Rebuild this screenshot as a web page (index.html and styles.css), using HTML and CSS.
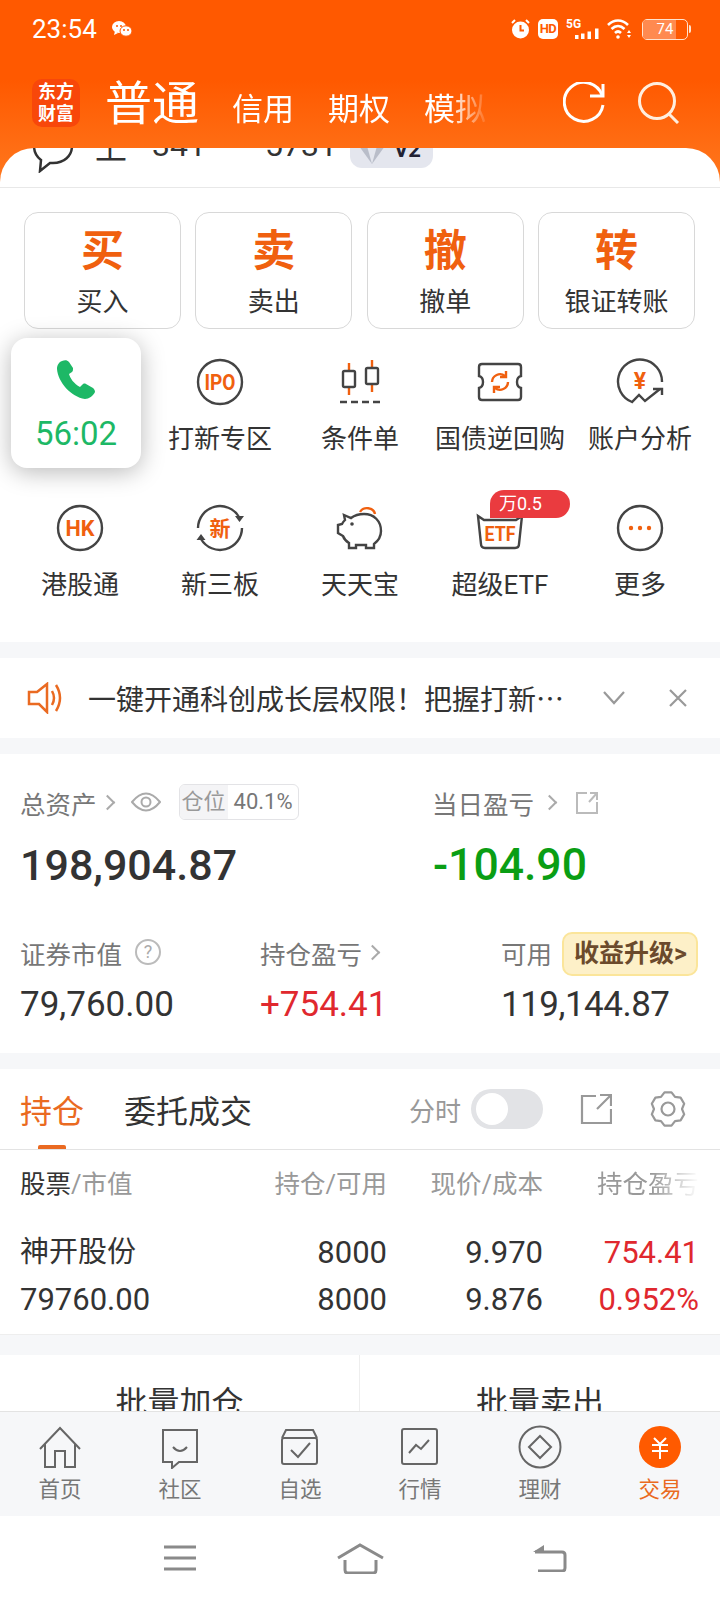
FILE: index.html
```html
<!DOCTYPE html>
<html lang="zh-CN">
<head>
  <meta charset="utf-8">
  <title>交易</title>
  <link rel="stylesheet" href="styles.css">
</head>
<body>
<div class="screen">

  <div class="top">
    <div class="status">
      <span class="clock">23:54</span>
      <svg class="st-wechat" width="20" height="16" viewBox="0 0 20 16"><ellipse cx="7" cy="6" rx="7" ry="6" fill="#fff"/><path d="M3 10l-1 4 4-2z" fill="#fff"/><ellipse cx="14" cy="10" rx="6" ry="5.2" fill="#fff" stroke="#ff5a00"/><circle cx="12" cy="9" r="1" fill="#ff5a00"/><circle cx="16" cy="9" r="1" fill="#ff5a00"/><circle cx="5" cy="5" r="1" fill="#ff5a00"/><circle cx="9" cy="5" r="1" fill="#ff5a00"/></svg>
      <div class="st-right">
        <svg width="19" height="20" viewBox="0 0 19 20"><circle cx="9.500" cy="11" r="8.500" fill="#fff"/><path d="M9.500 6v5.500H13" fill="none" stroke="#ff5a00" stroke-width="2"/><path d="M1 4l3-3M18 4l-3-3" stroke="#fff" stroke-width="2"/></svg>
        <span class="st-hd">HD</span>
        <svg width="33" height="22" viewBox="0 0 33 22"><text x="0" y="10" class="st-5g">5G</text><rect x="9" y="17" width="3.500" height="4" fill="#fff"/><rect x="15" y="15.500" width="3.500" height="5.500" fill="#fff"/><rect x="21.500" y="13.500" width="3.500" height="7.500" fill="#fff"/><rect x="29" y="10.500" width="3.500" height="10.500" fill="#fff"/></svg>
        <svg width="25" height="20" viewBox="0 0 25 20"><path d="M1 6c6-6 14-6 20 0M4.500 10c4-4 9-4 13 0M8 14c2-2 4-2 6 0" fill="none" stroke="#fff" stroke-width="2.600"/><circle cx="11" cy="18" r="1.800" fill="#fff"/><path d="M22 11l2 3h-4zM22 19l2-3h-4z" fill="#fff"/></svg>
        <div class="battery"><div class="battery-fill"></div><span>74</span></div>
      </div>
    </div>
    <div class="appbar">
      <div class="logo">东方<br>财富</div>
      <div class="acct-tabs">
        <span class="acct-on">普通</span>
        <span>信用</span>
        <span>期权</span>
        <span>模拟</span>
      </div>
      <svg class="bar-ico" width="42" height="42" viewBox="0 0 42 42" fill="none" stroke="#fff" stroke-width="3"><path d="M39 13A19.500 19.500 0 1 0 40 23"/><path d="M40 2v12H27"/></svg>
      <svg class="bar-ico" width="42" height="42" viewBox="0 0 42 42" fill="none" stroke="#ffeede" stroke-width="3"><circle cx="19" cy="19" r="17.500"/><path d="M31 32l9 9"/></svg>
    </div>
  </div>

  <div class="panel">
    <div class="peek">
      <div class="peek-row">
        <svg class="peek-chat" width="42" height="46" viewBox="0 0 42 46" fill="none" stroke="#333" stroke-width="2.500"><path d="M20 2C9 2 2 9 2 19c0 6 3 11 7 14l-1 11 10-8c1 0 2 0 3 0 11 0 19-7 19-17S31 2 20 2z"/></svg>
        <span class="peek-a">上</span>
        <span class="peek-b">341</span>
        <span class="peek-c">5731</span>
        <span class="peek-v"><svg width="28" height="40" viewBox="0 0 28 40"><path d="M1 20h26L14 38z" fill="#b9bdc9"/><path d="M14 38l-5-18h10z" fill="#e4e6ee"/></svg><b>V2</b></span>
      </div>
    </div>

    <div class="actions">
      <div class="act"><span class="act-big">买</span><span>买入</span></div>
      <div class="act"><span class="act-big">卖</span><span>卖出</span></div>
      <div class="act"><span class="act-big">撤</span><span>撤单</span></div>
      <div class="act"><span class="act-big">转</span><span>银证转账</span></div>
    </div>

    <div class="menu">
      <div class="menu-item"></div>
      <div class="menu-item">
        <svg width="48" height="48" viewBox="0 0 48 48"><circle class="ln" cx="24" cy="24" r="22"/><text class="og" x="24" y="32" font-size="22" text-anchor="middle" textLength="31" lengthAdjust="spacingAndGlyphs">IPO</text></svg>
        <span>打新专区</span>
      </div>
      <div class="menu-item">
        <svg width="48" height="48" viewBox="0 0 48 48"><path class="lo" d="M13 5v32M36 2v32"/><rect class="ln-f" x="7" y="13" width="12" height="16" rx="1.500"/><rect class="ln-f" x="30" y="10" width="12" height="16" rx="1.500"/><path class="ln" d="M4 44h41" stroke-dasharray="7 4"/></svg>
        <span>条件单</span>
      </div>
      <div class="menu-item">
        <svg width="48" height="48" viewBox="0 0 48 48"><path class="ln" d="M6 6h36q3 0 3 3v9q-4 1-4 6t4 6v9q0 3-3 3H6q-3 0-3-3V30q4-1 4-6t-4-6V9q0-3 3-3z"/><path class="lo" d="M16 24a8 8 0 0 1 13-6M32 24a8 8 0 0 1-13 6"/><path class="lo" d="M30 13v6h-6M18 35v-6h6"/></svg>
        <span>国债逆回购</span>
      </div>
      <div class="menu-item">
        <svg width="48" height="48" viewBox="0 0 48 48"><path class="ln" d="M46 24A22 22 0 1 0 16 44l7-7 6 6 15-12"/><path class="ln" d="M37 31h9v6"/><text class="og" x="24" y="31" font-size="23" text-anchor="middle">¥</text></svg>
        <span>账户分析</span>
      </div>
      <div class="menu-item">
        <svg width="48" height="48" viewBox="0 0 48 48"><circle class="ln" cx="24" cy="24" r="22"/><text class="og" x="24" y="32" font-size="22" text-anchor="middle" textLength="29" lengthAdjust="spacingAndGlyphs">HK</text></svg>
        <span>港股通</span>
      </div>
      <div class="menu-item">
        <svg width="48" height="48" viewBox="0 0 48 48"><path class="ln" d="M2 24A22 22 0 0 1 43 13M46 24A22 22 0 0 1 5 35"/><path d="M39 12h9l-4.500 6zM.5 36h9L5 30z" fill="#444"/><text class="og" x="24" y="32" font-size="21" text-anchor="middle">新</text></svg>
        <span>新三板</span>
      </div>
      <div class="menu-item">
        <svg width="48" height="48" viewBox="0 0 48 48"><path class="ln" d="M8 11l7 3c4-3 9-4 13-4 10 0 17 7 17 17 0 6-3 10-7 13v4h-8v-3H20v3h-7v-5c-3-2-5-4-6-7l-5-3v-8l4-1c1-2 2-3 3-4z"/><circle cx="16" cy="20" r="1.800" fill="#444"/><path class="lo" d="M24 8a8 7 0 0 1 15 2"/></svg>
        <span>天天宝</span>
      </div>
      <div class="menu-item">
        <svg width="48" height="48" viewBox="0 0 48 48"><path class="ln" d="M2 12l6 4h32l6-4-3 28q0 4-4 4H9q-4 0-4-4z"/><text class="og" x="24" y="37" font-size="20" text-anchor="middle" textLength="31" lengthAdjust="spacingAndGlyphs">ETF</text></svg>
        <span>超级ETF</span>
        <em class="menu-tag">万0.5</em>
      </div>
      <div class="menu-item">
        <svg width="48" height="48" viewBox="0 0 48 48"><circle class="ln" cx="24" cy="24" r="22"/><circle cx="15" cy="24" r="2.200" fill="#f0600f"/><circle cx="24" cy="24" r="2.200" fill="#f0600f"/><circle cx="33" cy="24" r="2.200" fill="#f0600f"/></svg>
        <span>更多</span>
      </div>
    </div>
  </div>

  <div class="notice">
    <svg width="36" height="32" viewBox="0 0 36 32" fill="none" stroke="#ea6a21" stroke-width="2.500"><path d="M2 10h8l10-8v28l-8-8H2z"/><path d="M25 9q4 7 0 14M29 3q8 13 0 26"/></svg>
    <span class="notice-txt">一键开通科创成长层权限！把握打新…</span>
    <svg class="notice-down" width="22" height="14" viewBox="0 0 22 14" fill="none" stroke="#999" stroke-width="2.200"><path d="M1 1l10 11L21 1"/></svg>
    <svg class="notice-x" width="18" height="18" viewBox="0 0 18 18" fill="none" stroke="#999" stroke-width="2.200"><path d="M1 1l16 16M17 1L1 17"/></svg>
  </div>

  <div class="assets">
    <div class="as-top">
      <div class="as-cell">
        <div class="as-label">总资产<i class="chev"></i>
          <svg class="as-eye" width="30" height="20" viewBox="0 0 30 20" fill="none" stroke="#aaa" stroke-width="2"><path d="M1 10q14-17 28 0-14 17-28 0z"/><circle cx="15" cy="10" r="4.500"/></svg>
          <span class="pill"><span class="pill-l">仓位</span><span class="pill-r">40.1%</span></span>
        </div>
        <div class="as-big">198,904.87</div>
      </div>
      <div class="as-cell">
        <div class="as-label">当日盈亏<i class="chev chev-w"></i>
          <svg class="as-share" width="24" height="23" viewBox="0 0 24 23" fill="none" stroke="#bbb" stroke-width="2"><path d="M12 2H2v20h20V11M14 11l8-9M15 2h7v7"/></svg>
        </div>
        <div class="as-big as-green">-104.90</div>
      </div>
    </div>
    <div class="as-bottom">
      <div class="as-col">
        <div class="as-label as-h">证券市值
          <span class="qmark">?</span>
        </div>
        <div class="as-num">79,760.00</div>
      </div>
      <div class="as-col as-col-2">
        <div class="as-label as-h">持仓盈亏<i class="chev"></i></div>
        <div class="as-num as-red">+754.41</div>
      </div>
      <div class="as-col as-col-3">
        <div class="as-label as-h">可用<span class="upgrade">收益升级&gt;</span></div>
        <div class="as-num as-tight">119,144.87</div>
      </div>
    </div>
  </div>

  <div class="holdings">
    <div class="h-tabs">
      <span class="h-tab h-on">持仓</span>
      <span class="h-tab">委托成交</span>
      <span class="h-time">分时</span>
      <span class="toggle"><span class="knob"></span></span>
      <svg class="h-share" width="32" height="30" viewBox="0 0 32 30" fill="none" stroke="#999" stroke-width="2.200"><path d="M16 2H2v27h29V15M17 15L30 2M20 1h11v11"/></svg>
      <svg class="h-gear" width="38" height="36" viewBox="-1 -1 38 36" fill="none" stroke="#999" stroke-width="2.200" stroke-linejoin="round"><path d="M14.500.4h7L25 4.900l5.600.7 3.600 6.100L32 17l2.200 5.300-3.600 6.100-5.600.7-3.500 4.500h-7L11 29.100l-5.600-.7-3.600-6.100L4 17l-2.200-5.300 3.600-6.100 5.600-.7z"/><circle cx="18" cy="17" r="6.500"/></svg>
    </div>
    <div class="tbl-head">
      <span><b>股票</b>/市值</span>
      <span class="r">持仓/可用</span>
      <span class="r">现价/成本</span>
      <span class="r tbl-fade">持仓盈亏</span>
    </div>
    <div class="tbl-body">
      <span class="tbl-cn">神开股份</span><span class="r">8000</span><span class="r">9.970</span><span class="r as-red">754.41</span>
      <span>79760.00</span><span class="r">8000</span><span class="r">9.876</span><span class="r as-red">0.952%</span>
    </div>
  </div>

  <div class="batch">
    <span>批量加仓</span>
    <span>批量卖出</span>
  </div>

  <div class="nav">
    <div class="nav-item">
      <svg width="44" height="44" viewBox="0 0 44 44"><path class="nl" d="M2 24L22 3l20 21M7 19v23h10V26h10v16h10V19"/></svg>
      <span>首页</span>
    </div>
    <div class="nav-item">
      <svg width="44" height="44" viewBox="0 0 44 44"><path class="nl" d="M5 5h34v32H21l-7 6v-6H5z"/><path class="nl" d="M15 22q7 8 14 0"/></svg>
      <span>社区</span>
    </div>
    <div class="nav-item">
      <svg width="44" height="44" viewBox="0 0 44 44"><rect class="nl" x="4" y="13" width="35" height="26" rx="2"/><path class="nl" d="M4 13l4-8h27l4 8"/><path class="nl" d="M13 25l7 7 12-14"/></svg>
      <span>自选</span>
    </div>
    <div class="nav-item">
      <svg width="44" height="44" viewBox="0 0 44 44"><rect class="nl" x="4" y="4" width="35" height="35" rx="2"/><path class="nl" d="M11 28l7-8 5 4 8-9"/></svg>
      <span>行情</span>
    </div>
    <div class="nav-item">
      <svg width="44" height="44" viewBox="0 0 44 44"><circle class="nl" cx="22" cy="22" r="20.500"/><path class="nl" d="M22 11l11 11-11 11-11-11z"/></svg>
      <span>理财</span>
    </div>
    <div class="nav-item nav-on">
      <svg width="44" height="44" viewBox="0 0 44 44"><circle cx="22" cy="22" r="21" fill="#ff5a00"/><path d="M16 13l6 6 6-6M14 20h16M14 26h16M22 19v15" fill="none" stroke="#fff" stroke-width="2"/></svg>
      <span>交易</span>
    </div>
  </div>

  <div class="sysbar">
    <svg width="34" height="26" viewBox="0 0 34 26"><path d="M1 2h32M1 13h32M1 24h32" stroke="#8a8a8a" stroke-width="3"/></svg>
    <svg width="47" height="31" viewBox="0 0 47 31" fill="none" stroke="#8a8a8a" stroke-width="3"><path d="M1 15L23 2l23 13M8 17v10q0 3 3 3h25q3 0 3-3V17"/></svg>
    <svg width="35" height="28" viewBox="0 0 35 28" fill="none" stroke="#8a8a8a" stroke-width="3"><path d="M3 8h27q3 0 3 3v13q0 3-3 3H6"/><path d="M1 8l11-7v7z" fill="#8a8a8a" stroke="none"/></svg>
  </div>

  <div class="call">
    <svg width="40" height="40" viewBox="0 0 40 40"><path fill="#1db866" d="M6 1C3 2 1 5 1 9c1 13 14 28 28 30 4 0 8-3 10-7 0-2-1-3-2-4l-7-4c-2-1-3 0-4 1l-2 2c-6-3-10-9-11-13l3-2c1-1 1-2 1-4l-4-6c-2-2-4-2-7-1z"/></svg>
    <span>56:02</span>
  </div>

</div>
</body>
</html>
```

FILE: styles.css
```css
* { box-sizing: border-box; }
html, body { margin: 0; padding: 0; }
body {
  font-family: Roboto, "Noto Sans CJK SC", sans-serif;
  color: #333;
  background: #fff;
}
.screen {
  position: relative;
  width: 720px;
  height: 1600px;
  overflow: hidden;
  background: #f6f7f9;
}

/* orange head */
.top {
  height: 190px;
  background: linear-gradient(#ff5900 0, #ff5900 80px, #ff7a20 190px);
  color: #fff;
}
.status {
  height: 58px;
  display: flex;
  align-items: center;
  padding: 0 32px;
}
.clock { font-size: 26px; }
.st-wechat { margin-left: 15px; }
.st-right {
  margin-left: auto;
  display: flex;
  align-items: center;
  gap: 8px;
}
.st-hd {
  width: 20px;
  height: 20px;
  background: #fff;
  color: #ff5a00;
  border-radius: 5px;
  font-size: 13px;
  font-weight: 700;
  line-height: 20px;
  text-align: center;
  letter-spacing: -.5px;
}
.st-5g { font-size: 12px; font-weight: 700; fill: #fff; }
.battery {
  position: relative;
  width: 46px;
  height: 21px;
  border: 1.5px solid #ffe3cf;
  border-radius: 5px;
  margin-left: 2px;
}
.battery::after {
  content: "";
  position: absolute;
  right: -4px;
  top: 5px;
  width: 2px;
  height: 8px;
  border-radius: 0 2px 2px 0;
  background: #ffe3cf;
}
.battery-fill {
  width: 74%;
  height: 100%;
  background: #ff8a50;
  border-radius: 3px 0 0 3px;
}
.battery span {
  position: absolute;
  inset: 0;
  font-size: 15px;
  line-height: 18px;
  text-align: center;
}
.appbar {
  display: flex;
  align-items: flex-start;
  padding: 21px 40px 0 32px;
}
.logo {
  width: 48px;
  height: 48px;
  border-radius: 10px;
  background: #f8470a;
  font-size: 18px;
  font-weight: 700;
  line-height: 22px;
  text-align: center;
  padding-top: 2px;
}
.acct-tabs {
  margin-left: 25px;
  width: 385px;
  display: flex;
  align-items: baseline;
  gap: 34px;
  font-size: 31px;
  line-height: 50px;
  -webkit-mask-image: linear-gradient(90deg, #000 345px, transparent 385px);
  mask-image: linear-gradient(90deg, #000 345px, transparent 385px);
}
.acct-on { font-size: 47px; margin-right: -1px; }
.bar-ico { margin-left: auto; margin-top: 3px; }
.bar-ico:last-child { margin-left: 33px; }

/* white sheet */
.panel {
  margin-top: -42px;
  position: relative;
  background: #fff;
  border-radius: 34px 34px 0 0;
  overflow: hidden;
  height: 494px;
}
.peek {
  height: 40px;
  overflow: hidden;
  border-bottom: 1px solid #e8e8e8;
}
.peek-row {
  margin-top: -26px;
  height: 46px;
  display: flex;
  align-items: center;
  font-size: 32px;
  padding-left: 32px;
  color: #333;
}
.peek-chat { flex: none; margin-top: 10px; }
.peek-a { margin-left: 21px; }
.peek-b { margin-left: 25px; }
.peek-c { margin-left: 59px; }
.peek-v {
  margin-left: 13px;
  width: 83px;
  height: 40px;
  margin-top: 6px;
  border-radius: 12px;
  background: #e4e6ee;
  display: flex;
  align-items: flex-end;
  padding: 0 0 2px 8px;
  font-size: 22px;
  line-height: 28px;
  color: #223;
}
.peek-v b { margin-left: 8px; margin-bottom: 2px; }

.actions {
  display: flex;
  justify-content: space-between;
  padding: 24px 25px 0 24px;
}
.act {
  width: 157px;
  height: 117px;
  border: 1px solid #d8d8d8;
  border-radius: 14px;
  display: flex;
  flex-direction: column;
  align-items: center;
  font-size: 26px;
  line-height: 36px;
  padding-top: 13px;
}
.act-big {
  font-size: 43px;
  font-weight: 700;
  line-height: 50px;
  margin-bottom: 8px;
  color: #f0600f;
}

.menu {
  display: grid;
  grid-template-columns: repeat(5, 140px);
  row-gap: 47px;
  padding: 29px 10px 0;
}
.menu-item {
  position: relative;
  height: 99px;
  display: flex;
  flex-direction: column;
  align-items: center;
  gap: 15px;
  font-size: 26px;
  line-height: 36px;
  white-space: nowrap;
}
.menu-tag {
  position: absolute;
  left: 60px;
  top: -14px;
  width: 80px;
  height: 28px;
  background: #ea3b3f;
  color: #fff;
  border-radius: 14px 14px 14px 0;
  font-style: normal;
  font-size: 18px;
  line-height: 28px;
  padding-left: 9px;
}
.ln { fill: none; stroke: #444; stroke-width: 2.4; }
.ln-f { fill: #fff; stroke: #444; stroke-width: 2.4; }
.lo { fill: none; stroke: #f0600f; stroke-width: 2.4; }
.og { fill: #f0600f; font-weight: 700; }

/* notice */
.notice {
  margin-top: 16px;
  height: 80px;
  background: #fff;
  display: flex;
  align-items: center;
  padding-left: 27px;
}
.notice-txt {
  margin-left: 25px;
  width: 476px;
  font-family: "Noto Sans CJK SC", sans-serif;
  font-size: 28px;
  white-space: nowrap;
  overflow: hidden;
}
.notice-down { margin-left: 39px; }
.notice-x { margin-left: 44px; }

/* assets */
.assets {
  margin-top: 16px;
  height: 299px;
  background: #fff;
  padding: 30px 0 0 20px;
}
.as-top { display: flex; }
.as-cell { flex: none; width: 412px; }
.as-label {
  display: flex;
  align-items: center;
  height: 36px;
  font-size: 25.5px;
  color: #777;
  white-space: nowrap;
}
.chev {
  display: inline-block;
  width: 11px;
  height: 11px;
  border-top: 2px solid #aaa;
  border-right: 2px solid #aaa;
  transform: rotate(45deg);
  margin-left: 5px;
}
.chev-w { margin-left: 10px; }
.as-eye { margin-left: 18px; }
.pill {
  margin-left: 18px;
  height: 36px;
  width: 120px;
  display: flex;
  border: 1px solid #e3e3e6;
  border-radius: 6px;
  overflow: hidden;
  line-height: 34px;
  font-size: 22px;
}
.pill-l { width: 48px; background: #f4f4f6; color: #999; text-align: center; }
.pill-r { margin-left: 6px; color: #777; }
.as-share { margin-left: 20px; }
.as-big {
  margin-top: 20px;
  font-size: 43px;
  font-weight: 500;
  line-height: 50px;
  color: #333;
}
.as-big.as-green { color: #0a9e14; font-size: 44.5px; padding-left: 1px; }
.as-red { color: #e0282e; }
.as-bottom { display: flex; margin-top: 42px; }
.as-col { flex: none; width: 240px; }
.as-col-3 { margin-left: 1px; width: 199px; }
.as-h { height: 44px; padding-bottom: 4px; }
.qmark {
  margin-left: 13px;
  width: 26px;
  height: 26px;
  border: 2px solid #bbb;
  border-radius: 50%;
  color: #aaa;
  font-size: 18px;
  line-height: 22px;
  text-align: center;
}
.upgrade {
  margin: 0 0 -4px 10px;
  width: 136px;
  height: 44px;
  background: #fdf0c8;
  border: 2px solid #fbe59a;
  border-radius: 10px;
  color: #6b4a2c;
  font-size: 25px;
  font-weight: 700;
  line-height: 40px;
  padding-left: 10px;
}
.as-num {
  margin-top: 9px;
  font-size: 35px;
  line-height: 40px;
  color: #333;
}
.as-num.as-red { color: #e0282e; }
.as-tight { letter-spacing: -.5px; }

/* holdings */
.holdings {
  margin-top: 16px;
  height: 266px;
  background: #fff;
  border-bottom: 1px solid #eee;
}
.h-tabs {
  position: relative;
  height: 81px;
  display: flex;
  align-items: center;
  padding: 0 33px 0 20px;
  border-bottom: 1px solid #e3e3e3;
  color: #333;
}
.h-tab { font-size: 32px; margin-right: 40px; }
.h-on { color: #ea6a21; }
.h-on::after {
  content: "";
  position: absolute;
  left: 38px;
  bottom: 0;
  width: 28px;
  height: 4px;
  border-radius: 2px 2px 0 0;
  background: #ea6a21;
}
.h-time { margin-left: auto; font-size: 26px; color: #999; }
.toggle {
  margin-left: 10px;
  width: 72px;
  height: 40px;
  border-radius: 20px;
  background: #e2e3e6;
  padding: 4px 5px;
}
.knob {
  display: block;
  width: 32px;
  height: 32px;
  border-radius: 50%;
  background: #fff;
}
.h-share { margin-left: 37px; }
.h-gear { margin-left: 37px; }
.tbl-head, .tbl-body {
  display: grid;
  grid-template-columns: 1fr 120px 156px 156px;
  padding: 0 21px 0 20px;
}
.tbl-head {
  height: 66px;
  padding-bottom: 4px;
  align-items: center;
  font-size: 25.5px;
  color: #999;
}
.tbl-head b { font-weight: 400; color: #333; }
.r { text-align: right; }
.tbl-fade {
  -webkit-mask-image: linear-gradient(90deg, #000 70%, transparent);
  mask-image: linear-gradient(90deg, #000 70%, transparent);
}
.tbl-body {
  padding-top: 13px;
  font-size: 31px;
  line-height: 47px;
  color: #333;
}
.tbl-cn { font-size: 29px; }
.tbl-body .as-red { color: #e0282e; }

/* batch buttons, cut by the nav */
.batch {
  margin-top: 20px;
  height: 56px;
  background: #fff;
  display: grid;
  grid-template-columns: 359px 1fr;
  overflow: hidden;
  font-size: 32px;
  line-height: 38px;
  text-align: center;
}
.batch span { padding-top: 29px; }
.batch span + span { border-left: 1px solid #eee; }

/* nav */
.nav {
  height: 105px;
  background: #f6f7f9;
  border-top: 1px solid #e3e3e3;
  display: grid;
  grid-template-columns: repeat(6, 120px);
}
.nav-item {
  display: flex;
  flex-direction: column;
  align-items: center;
  padding-top: 13px;
  font-size: 21.5px;
  line-height: 30px;
  color: #777;
}
.nav-item span { margin-top: 6px; }
.nav-on { color: #ea6a21; }
.nl { fill: none; stroke: #666; stroke-width: 2; }

.sysbar {
  height: 84px;
  background: #fff;
  display: flex;
  align-items: center;
  padding-left: 163px;
  gap: 140px;
}
.sysbar svg:last-child { margin-left: 8px; }

/* floating call */
.call {
  position: absolute;
  left: 11px;
  top: 338px;
  width: 130px;
  height: 130px;
  border-radius: 16px;
  background: #fff;
  box-shadow: 0 4px 24px rgba(0, 0, 0, .28);
  display: flex;
  flex-direction: column;
  align-items: center;
  padding-top: 22px;
  color: #1db866;
  font-size: 33px;
  line-height: 40px;
}
.call span { margin-top: 14px; }
```
